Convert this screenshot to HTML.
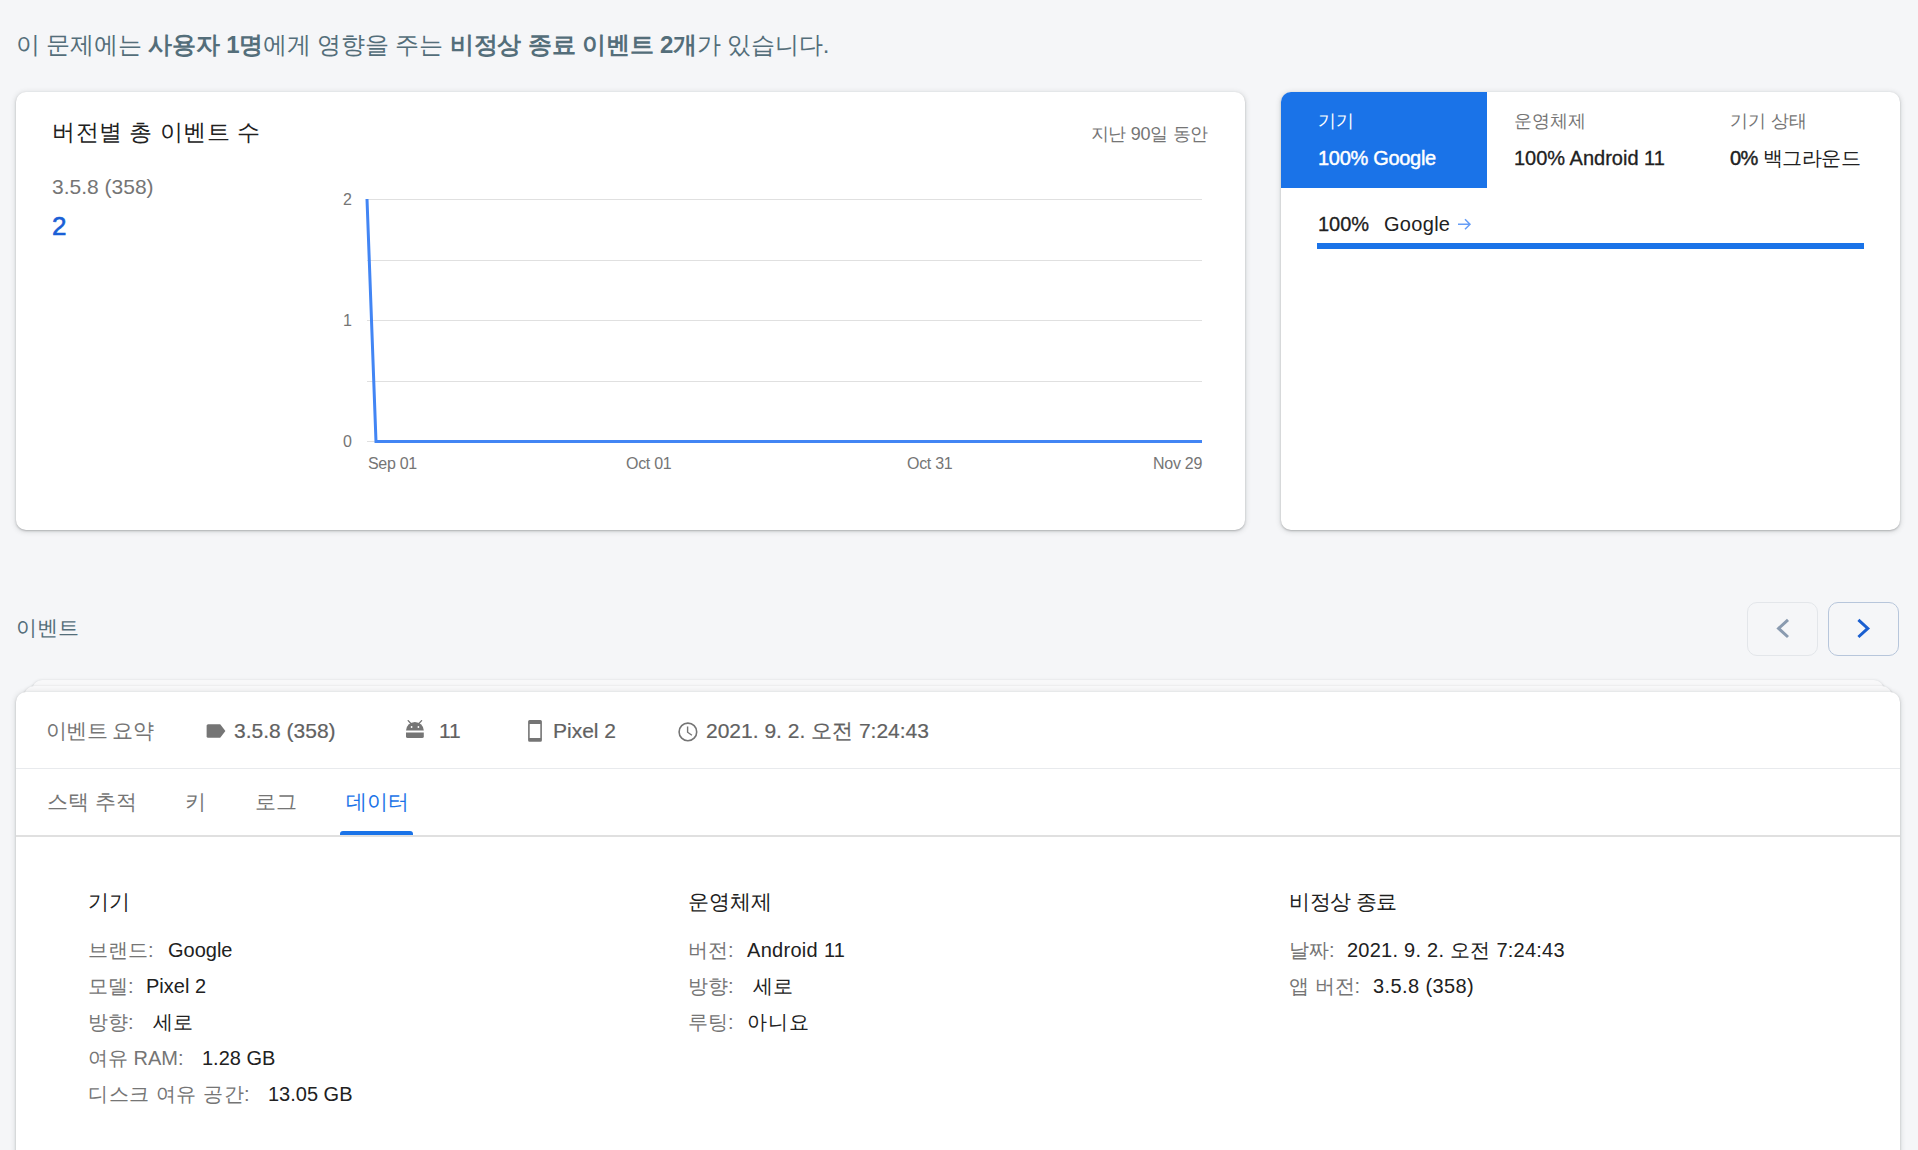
<!DOCTYPE html>
<html lang="ko">
<head>
<meta charset="utf-8">
<style>
*{box-sizing:border-box;margin:0;padding:0}
html,body{width:1918px;height:1150px;overflow:hidden;background:#f5f6f8;font-family:"Liberation Sans",sans-serif;color:#212121;position:relative}
.a{position:absolute;white-space:nowrap;line-height:1}
.hdr{left:16px;top:33px;font-size:24px;color:#546e7a;letter-spacing:-0.16px}
.hdr b{font-weight:700}
.card{position:absolute;background:#fff;border-radius:10px;box-shadow:0 1px 2px 0 rgba(60,64,67,.3),0 1px 5px 1px rgba(60,64,67,.15)}
#c1{left:16px;top:92px;width:1229px;height:438px}
#c2{left:1281px;top:92px;width:619px;height:438px;overflow:hidden}
.g{color:#757575}
.d{color:#212121}
.blue{color:#1a73e8}
.grid{position:absolute;left:351px;width:835px;height:1px;background:#e0e0e0}
.ylab{position:absolute;font-size:16px;color:#757575;line-height:1}
.xlab{position:absolute;font-size:16px;color:#757575;line-height:1;white-space:nowrap;letter-spacing:-0.3px}
.tab{position:absolute;top:0;height:96px}
.btn{position:absolute;top:602px;width:71px;height:54px;border-radius:10px;border:1px solid #e3e6ea}
.layer{position:absolute;border-radius:10px;background:#f8f8f9;box-shadow:0 1px 2px rgba(60,64,67,.25),0 1px 3px 1px rgba(60,64,67,.1)}
.lbl{color:#757575}
</style>
</head>
<body>
<div class="a hdr">이 문제에는 <b>사용자 1명</b>에게 영향을 주는 <b>비정상 종료 이벤트 2개</b>가 있습니다.</div>

<div class="card" id="c1">
  <div class="a d" style="left:36px;top:29px;font-size:23px;letter-spacing:0.5px">버전별 총 이벤트 수</div>
  <div class="a g" style="right:37px;top:33px;font-size:18px;letter-spacing:-0.3px">지난 90일 동안</div>
  <div class="a g" style="left:36px;top:84px;font-size:21px">3.5.8 (358)</div>
  <div class="a" style="left:36px;top:121px;font-size:26px;color:#1a5fd6;-webkit-text-stroke:0.6px #1a5fd6">2</div>
  <div class="ylab" style="left:327px;top:100px">2</div>
  <div class="ylab" style="left:327px;top:221px">1</div>
  <div class="ylab" style="left:327px;top:342px">0</div>
  <div class="grid" style="top:107px"></div>
  <div class="grid" style="top:168px"></div>
  <div class="grid" style="top:228px"></div>
  <div class="grid" style="top:289px"></div>
  <div class="grid" style="top:349px"></div>
  <svg style="position:absolute;left:0;top:0" width="1229" height="438">
    <polyline points="351,107 360,349.5 1186,349.5" fill="none" stroke="#4285f4" stroke-width="3" stroke-linejoin="miter"/>
  </svg>
  <div class="xlab" style="left:352px;top:364px">Sep 01</div>
  <div class="xlab" style="left:610px;top:364px">Oct 01</div>
  <div class="xlab" style="left:891px;top:364px">Oct 31</div>
  <div class="xlab" style="right:43px;top:364px">Nov 29</div>
</div>

<div class="card" id="c2">
  <div style="position:absolute;left:0;top:0;width:206px;height:96px;background:#1a73e8"></div>
  <div class="a" style="left:37px;top:20px;font-size:18px;color:#fff">기기</div>
  <div class="a" style="left:37px;top:56px;font-size:20px;color:#fff;-webkit-text-stroke:0.45px #fff;letter-spacing:-0.3px">100% Google</div>
  <div class="a g" style="left:233px;top:20px;font-size:18px">운영체제</div>
  <div class="a d" style="left:233px;top:56px;font-size:20px;-webkit-text-stroke:0.3px #212121;letter-spacing:0px">100% Android 11</div>
  <div class="a g" style="left:449px;top:20px;font-size:18px">기기 상태</div>
  <div class="a d" style="left:449px;top:56px;font-size:20px;letter-spacing:-0.55px"><span style="-webkit-text-stroke:0.45px #212121">0%</span> 백그라운드</div>
  <div class="a d" style="left:37px;top:122px;font-size:20px;-webkit-text-stroke:0.3px #212121">100%</div><div class="a d" style="left:103px;top:122px;font-size:20px;letter-spacing:0.3px">Google</div>
  <div style="position:absolute;left:36px;top:151px;width:547px;height:6px;background:#1a73e8"></div>
</div>

<div class="a" style="left:16px;top:617px;font-size:21px;color:#546e7a">이벤트</div>
<div class="btn" style="left:1747px"></div>
<div class="btn" style="left:1828px;border-color:#b7c6db"></div>

<div class="layer" style="left:32px;top:680px;width:1852px;height:500px"></div>
<div class="layer" style="left:24px;top:686px;width:1868px;height:500px"></div>
<div class="card" id="c3" style="left:16px;top:692px;width:1884px;height:520px">
  <div class="a g" style="left:30px;top:28px;font-size:21px;letter-spacing:-0.6px">이벤트 요약</div>
  <div class="a" style="left:218px;top:28px;font-size:21px;color:#616161;-webkit-text-stroke:0.2px #616161">3.5.8 (358)</div>
  <div class="a" style="left:423px;top:28px;font-size:21px;color:#616161;-webkit-text-stroke:0.2px #616161">11</div>
  <div class="a" style="left:537px;top:28px;font-size:21px;color:#616161;-webkit-text-stroke:0.2px #616161">Pixel 2</div>
  <div class="a" style="left:690px;top:28px;font-size:21px;color:#616161;-webkit-text-stroke:0.2px #616161">2021. 9. 2. 오전 7:24:43</div>
  <div style="position:absolute;left:0;top:76px;width:100%;height:1px;background:#e8eaed"></div>
  <div class="a g" style="left:31px;top:99px;font-size:21px">스택 추적</div>
  <div class="a g" style="left:169px;top:99px;font-size:21px">키</div>
  <div class="a g" style="left:239px;top:99px;font-size:21px">로그</div>
  <div class="a blue" style="left:330px;top:99px;font-size:21px">데이터</div>
  <div style="position:absolute;left:324px;top:139px;width:73px;height:4px;background:#1a73e8;border-radius:3px 3px 0 0"></div>
  <div style="position:absolute;left:0;top:143px;width:100%;height:2px;background:#e0e0e0"></div>

  <div class="a d" style="left:72px;top:199px;font-size:21px">기기</div>
  <div class="a" style="left:72px;top:248px;font-size:20px"><span class="lbl">브랜드:</span></div>
  <div class="a d" style="left:152px;top:248px;font-size:20px">Google</div>
  <div class="a" style="left:72px;top:284px;font-size:20px"><span class="lbl">모델:</span></div>
  <div class="a d" style="left:130px;top:284px;font-size:20px">Pixel 2</div>
  <div class="a" style="left:72px;top:320px;font-size:20px"><span class="lbl">방향:</span></div>
  <div class="a d" style="left:137px;top:320px;font-size:20px">세로</div>
  <div class="a" style="left:72px;top:356px;font-size:20px"><span class="lbl">여유 RAM:</span></div>
  <div class="a d" style="left:186px;top:356px;font-size:20px">1.28 GB</div>
  <div class="a" style="left:72px;top:392px;font-size:20px"><span class="lbl" style="letter-spacing:0.55px">디스크 여유 공간:</span></div>
  <div class="a d" style="left:252px;top:392px;font-size:20px">13.05 GB</div>

  <div class="a d" style="left:672px;top:199px;font-size:21px">운영체제</div>
  <div class="a" style="left:672px;top:248px;font-size:20px"><span class="lbl">버전:</span></div>
  <div class="a d" style="left:731px;top:248px;font-size:20px;letter-spacing:0.3px">Android 11</div>
  <div class="a" style="left:672px;top:284px;font-size:20px"><span class="lbl">방향:</span></div>
  <div class="a d" style="left:737px;top:284px;font-size:20px">세로</div>
  <div class="a" style="left:672px;top:320px;font-size:20px"><span class="lbl">루팅:</span></div>
  <div class="a d" style="left:731px;top:320px;font-size:20px;letter-spacing:1px">아니요</div>

  <div class="a d" style="left:1273px;top:199px;font-size:21px;letter-spacing:-0.5px">비정상 종료</div>
  <div class="a" style="left:1273px;top:248px;font-size:20px"><span class="lbl">날짜:</span></div>
  <div class="a d" style="left:1331px;top:248px;font-size:20px;letter-spacing:0.25px">2021. 9. 2. 오전 7:24:43</div>
  <div class="a" style="left:1273px;top:284px;font-size:20px"><span class="lbl">앱 버전:</span></div>
  <div class="a d" style="left:1357px;top:284px;font-size:20px;letter-spacing:0.4px">3.5.8 (358)</div>
</div>

<svg style="position:absolute;left:0;top:0" width="1918" height="1150" viewBox="0 0 1918 1150">
  <!-- tag -->
  <path d="M208.2 724.2H220.2L225.4 731L220.2 737.8H208.2Q206.6 737.8 206.6 736.2V725.8Q206.6 724.2 208.2 724.2Z" fill="#757575"/>
  <!-- android -->
  <g fill="#757575">
    <path d="M406 730.6A8.9 8.6 0 0 1 423.8 730.6Z"/>
    <path d="M406 732.5H423.8V736.4Q423.8 738.1 422.1 738.1H407.7Q406 738.1 406 736.4Z"/>
  </g>
  <g stroke="#757575" stroke-width="1.3" stroke-linecap="round">
    <line x1="408.2" y1="720.6" x2="410.6" y2="723.2"/>
    <line x1="421.6" y1="720.6" x2="419.2" y2="723.2"/>
  </g>
  <circle cx="411.6" cy="727" r="0.9" fill="#fff"/>
  <circle cx="418.4" cy="727" r="0.9" fill="#fff"/>
  <!-- phone -->
  <path fill="#757575" fill-rule="evenodd" d="M529.6 720.1H540.4Q541.9 720.1 541.9 721.6V740.3Q541.9 741.8 540.4 741.8H529.6Q528.1 741.8 528.1 740.3V721.6Q528.1 720.1 529.6 720.1ZM529.7 724H540.3V737.9H529.7Z"/>
  <!-- clock -->
  <circle cx="687.9" cy="731.9" r="8.8" fill="none" stroke="#757575" stroke-width="1.6"/>
  <path d="M687.6 726.6V732.2L691.9 735.2" fill="none" stroke="#757575" stroke-width="1.4"/>
  <!-- chevrons -->
  <path d="M1788 619.8L1778.6 628.4L1788 637" fill="none" stroke="#8a9bb0" stroke-width="3"/>
  <path d="M1858.4 619.8L1867.8 628.4L1858.4 637" fill="none" stroke="#1a5fd0" stroke-width="3"/>
  <!-- arrow -->
  <path d="M1458 224.3H1470M1465 219.3L1470 224.3L1465 229.3" fill="none" stroke="#669df6" stroke-width="1.5"/>
</svg>
</body>
</html>
